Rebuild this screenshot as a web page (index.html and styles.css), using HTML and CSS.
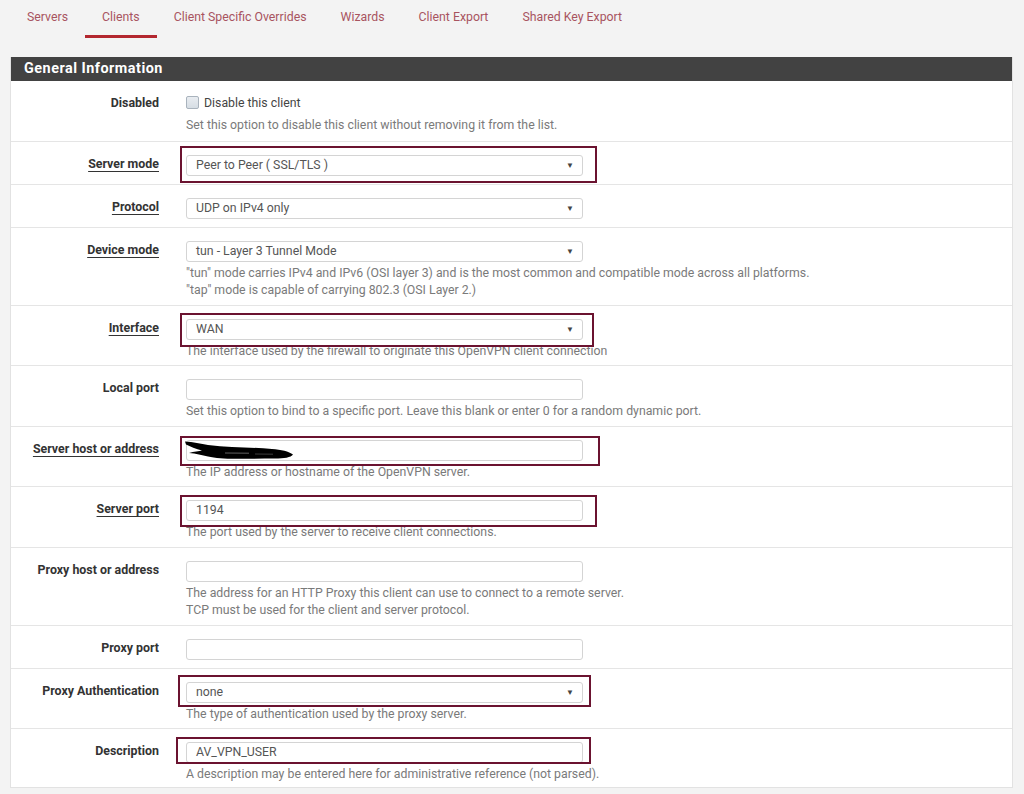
FILE: index.html
```html
<!DOCTYPE html>
<html lang="en">
<head>
<meta charset="utf-8">
<title>OpenVPN Clients</title>
<link rel="stylesheet" href="styles.css">
</head>
<body>
<nav class="tabs">
  <a class="tab">Servers</a>
  <a class="tab active">Clients</a>
  <a class="tab">Client Specific Overrides</a>
  <a class="tab">Wizards</a>
  <a class="tab">Client Export</a>
  <a class="tab">Shared Key Export</a>
</nav>

<section class="panel">
  <h2 class="panel-head">General Information</h2>

  <div class="row row-check">
    <div class="label">Disabled</div>
    <div class="field">
      <div class="check-line"><span class="checkbox"></span><span>Disable this client</span></div>
      <div class="help">Set this option to disable this client without removing it from the list.</div>
    </div>
  </div>

  <div class="row">
    <div class="label"><span class="u">Server mode</span></div>
    <div class="field">
      <div class="control select">Peer to Peer ( SSL/TLS )<span class="caret">&#9660;</span></div>
      <div class="mark mark-server-mode"></div>
    </div>
  </div>

  <div class="row">
    <div class="label"><span class="u">Protocol</span></div>
    <div class="field">
      <div class="control select">UDP on IPv4 only<span class="caret">&#9660;</span></div>
    </div>
  </div>

  <div class="row">
    <div class="label"><span class="u">Device mode</span></div>
    <div class="field">
      <div class="control select">tun - Layer 3 Tunnel Mode<span class="caret">&#9660;</span></div>
      <div class="help">"tun" mode carries IPv4 and IPv6 (OSI layer 3) and is the most common and compatible mode across all platforms.<br>"tap" mode is capable of carrying 802.3 (OSI Layer 2.)</div>
    </div>
  </div>

  <div class="row">
    <div class="label"><span class="u">Interface</span></div>
    <div class="field">
      <div class="control select">WAN<span class="caret">&#9660;</span></div>
      <div class="help">The interface used by the firewall to originate this OpenVPN client connection</div>
      <div class="mark mark-interface"></div>
    </div>
  </div>

  <div class="row">
    <div class="label">Local port</div>
    <div class="field">
      <div class="control"></div>
      <div class="help">Set this option to bind to a specific port. Leave this blank or enter 0 for a random dynamic port.</div>
    </div>
  </div>

  <div class="row">
    <div class="label"><span class="u">Server host or address</span></div>
    <div class="field">
      <div class="control scribble-box">
        <svg class="scribble" width="112" height="20" viewBox="0 0 112 20" aria-hidden="true">
          <path d="M0 0.5 C8 1 16 2.5 23 4 C31 5 39 5.5 47 6 C61 6.5 75 7 87 8 C96 8.5 104 10.5 108 13.5 C106 16.5 99 17.5 90 17.5 C76 17.5 62 17.8 50 17.8 C40 17.8 30 17 23 15.5 C17 14 11 12.5 4 12 C9 10.5 14 10 17 9.5 C11 8 5 5.5 1 3.5 Z" fill="#000"/>
          <path d="M40 12 L64 12.2" stroke="#fff" stroke-width="0.7" opacity="0.55"/>
          <path d="M70 13 L88 13.2" stroke="#fff" stroke-width="0.6" opacity="0.4"/>
        </svg>
      </div>
      <div class="help">The IP address or hostname of the OpenVPN server.</div>
      <div class="mark mark-host"></div>
    </div>
  </div>

  <div class="row">
    <div class="label"><span class="u">Server port</span></div>
    <div class="field">
      <div class="control">1194</div>
      <div class="help">The port used by the server to receive client connections.</div>
      <div class="mark mark-port"></div>
    </div>
  </div>

  <div class="row">
    <div class="label">Proxy host or address</div>
    <div class="field">
      <div class="control"></div>
      <div class="help">The address for an HTTP Proxy this client can use to connect to a remote server.<br>TCP must be used for the client and server protocol.</div>
    </div>
  </div>

  <div class="row">
    <div class="label">Proxy port</div>
    <div class="field">
      <div class="control"></div>
    </div>
  </div>

  <div class="row">
    <div class="label">Proxy Authentication</div>
    <div class="field">
      <div class="control select">none<span class="caret">&#9660;</span></div>
      <div class="help">The type of authentication used by the proxy server.</div>
      <div class="mark mark-auth"></div>
    </div>
  </div>

  <div class="row last">
    <div class="label">Description</div>
    <div class="field">
      <div class="control">AV_VPN_USER</div>
      <div class="help">A description may be entered here for administrative reference (not parsed).</div>
      <div class="mark mark-desc"></div>
    </div>
  </div>
</section>
</body>
</html>
```

FILE: styles.css
```css
html, body {
  margin: 0;
  padding: 0;
  background: #f3f3f3;
  font-family: Roboto, "Liberation Sans", Arial, sans-serif;
  font-size: 12.3px;
  color: #333;
}

.tabs {
  display: flex;
  padding: 9px 0 0 10px;
  height: 29px;
}

.tab {
  display: block;
  padding: 0 17px;
  height: 26px;
  line-height: 16px;
  font-size: 12.3px;
  color: #a8545f;
  border-bottom: 3px solid transparent;
}

.tab.active {
  border-bottom-color: #b3272f;
}

.panel {
  margin: 19px 0 0 10px;
  width: 1001px;
  background: #fff;
  border: 1px solid #e2e2e2;
  border-top: 0;
}

.panel-head {
  margin: 0;
  height: 24px;
  line-height: 24px;
  background: #424242;
  color: #fff;
  font-size: 14.4px;
  font-weight: 700;
  letter-spacing: 0.5px;
  padding-left: 13px;
}

.row {
  display: grid;
  grid-template-columns: 149px 397px;
  column-gap: 26px;
  padding: 13px 0 8px;
  border-bottom: 1px solid #e5e5e5;
}

.row.last {
  border-bottom: 0;
  padding-bottom: 6px;
}

.label {
  text-align: right;
  font-weight: 700;
  font-size: 12.4px;
  line-height: 17px;
  color: #333;
  padding-right: 1px;
}

.u {
  text-decoration: underline;
  text-decoration-thickness: 1px;
  text-underline-offset: 3px;
}

.field {
  position: relative;
}

.control {
  box-sizing: border-box;
  height: 21px;
  border: 1px solid #d4d4d4;
  border-radius: 3px;
  background: #fff;
  color: #555;
  padding: 0 9px;
  line-height: 19px;
  display: flex;
  align-items: center;
  justify-content: space-between;
}

.caret {
  font-size: 8px;
  color: #444;
  margin-right: -1px;
}

.scribble-box {
  padding: 0;
  justify-content: flex-start;
}

.scribble {
  display: block;
  margin-left: -2px;
  margin-top: 1px;
}

.help {
  margin: 3px 0 -3px;
  line-height: 17.5px;
  color: #7a7a7a;
  white-space: nowrap;
}

.row-check {
  padding-bottom: 9px;
}

.check-line {
  display: flex;
  align-items: center;
  gap: 5px;
  height: 17px;
  color: #444;
}

.checkbox {
  box-sizing: border-box;
  width: 13px;
  height: 13px;
  border: 1px solid #a9b3bd;
  border-radius: 2px;
  background: linear-gradient(#e9edf1, #d6dde4);
}

.row-check .help {
  margin-top: 6px;
}

/* red annotation boxes drawn over the form */
.mark {
  position: absolute;
  box-sizing: border-box;
  border: 2px solid #6b1330;
  pointer-events: none;
}

.mark-server-mode { left: -6px; top: -9px; width: 417px; height: 37px; }
.mark-interface   { left: -6px; top: -6px; width: 414px; height: 34px; }
.mark-host        { left: -6px; top: -4px; width: 420px; height: 30px; }
.mark-port        { left: -6px; top: -5px; width: 417px; height: 32px; }
.mark-auth        { left: -8px; top: -7px; width: 413px; height: 32px; }
.mark-desc        { left: -10px; top: -5px; width: 415px; height: 27px; }
```
